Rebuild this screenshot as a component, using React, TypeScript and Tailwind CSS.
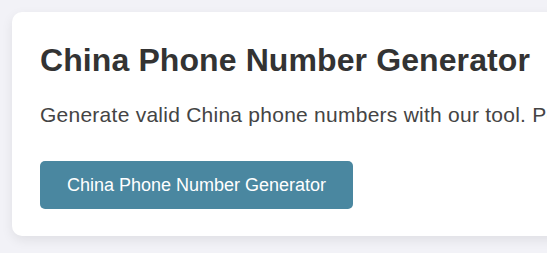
import * as React from 'react';

// Card with a title, a short intro line and the main action button.
function GeneratorCard() {
    return (
        <div className="w-[640px] shrink-0 self-start rounded-[10px] bg-white pt-[29px] pb-[27px] pl-[28px] shadow-[0_4px_12px_rgba(0,0,0,0.08)]">
            <h1 className="text-[32px] leading-[38px] font-bold tracking-[0.1px] text-[#333333] whitespace-nowrap">
                China Phone Number Generator
            </h1>
            <p className="mt-[22px] text-[21px] leading-[28px] tracking-[0.25px] text-[#444444] whitespace-nowrap">
                Generate valid China phone numbers with our tool. Perfect for testing and development.
            </p>
            <button className="mt-[32px] block h-[48px] w-[313px] rounded-[5px] bg-[#4a87a0] text-[18px] text-white">
                China Phone Number Generator
            </button>
        </div>
    );
}

export default function App() {
    return (
        <div
            className="flex h-[253px] w-[547px] overflow-hidden bg-[#f2f2f7] p-[12px]"
            style={{ fontFamily: '"Liberation Sans", Arial, sans-serif' }}
        >
            <GeneratorCard />
        </div>
    );
}
